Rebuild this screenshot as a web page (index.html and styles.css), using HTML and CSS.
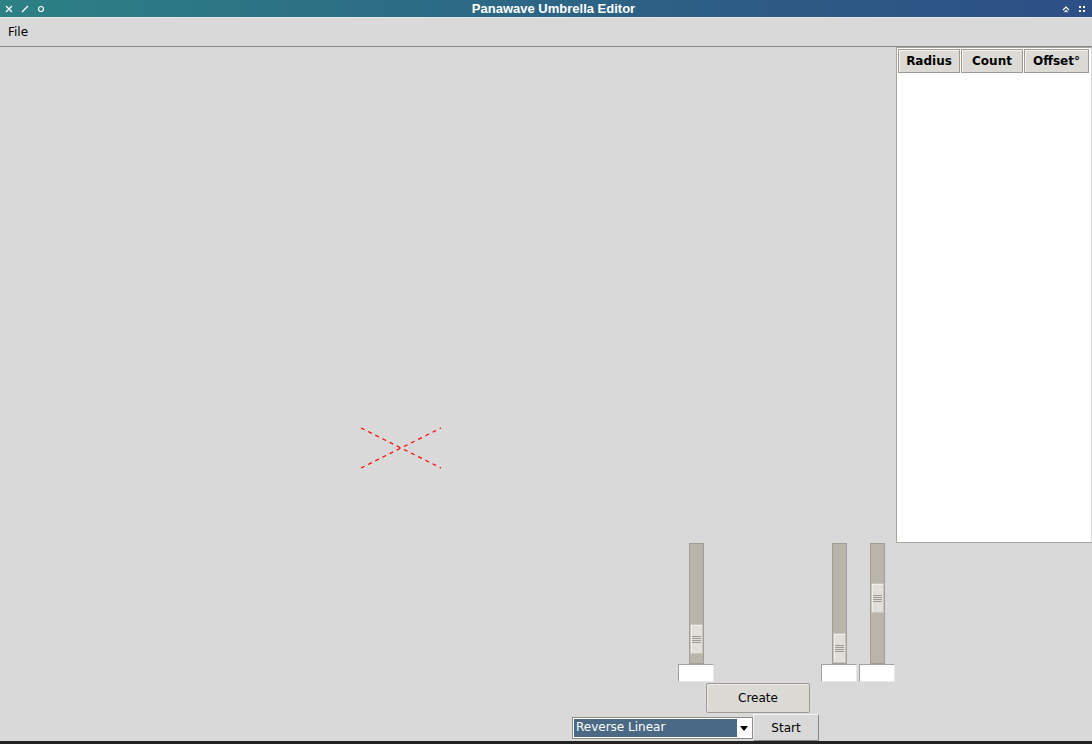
FILE: index.html
```html
<!DOCTYPE html>
<html>
<head>
<meta charset="utf-8">
<link rel="stylesheet" href="styles.css">
</head>
<body>
<div class="window">
  <div class="titlebar">
    <div class="tb-left">
      <svg width="8" height="8" viewBox="0 0 8 8"><path d="M1 1L7 7M7 1L1 7" stroke="#fff" stroke-width="1.2"/></svg>
      <svg width="8" height="8" viewBox="0 0 8 8"><path d="M1 7L7 1" stroke="#fff" stroke-width="1.2"/></svg>
      <svg width="8" height="8" viewBox="0 0 8 8"><circle cx="4" cy="4" r="2.5" fill="none" stroke="#fff" stroke-width="1.2"/></svg>
    </div>
    <div class="tb-title">Panawave Umbrella Editor</div>
    <div class="tb-right">
      <svg width="8" height="8" viewBox="0 0 8 8"><path d="M1 5L4 2L7 5M2.5 7L4 5.5L5.5 7" stroke="#fff" stroke-width="1.1" fill="none"/></svg>
      <svg width="8" height="8" viewBox="0 0 8 8"><rect x="1" y="1" width="2" height="2" fill="#fff"/><rect x="5" y="1" width="2" height="2" fill="#fff"/><rect x="1" y="5" width="2" height="2" fill="#fff"/><rect x="5" y="5" width="2" height="2" fill="#fff"/></svg>
    </div>
  </div>
  <div class="menubar"><span class="menu-item">File</span></div>
  <div class="main">
    <div class="left">
      <div class="canvas">
        <svg class="cross" width="82" height="42" viewBox="0 0 82 42">
          <path d="M1 1L81 41M1 41L81 1" stroke="#ff0000" stroke-width="1.2" stroke-dasharray="4 4" fill="none"/>
        </svg>
      </div>
      <div class="controls">
        <div class="slider-row">
          <div class="sgroup g1">
            <div class="trough"><div class="thumb" style="margin-top:80px"><i></i><i></i><i></i><i></i></div></div>
            <div class="entry"></div>
          </div>
          <div class="sgroup g2">
            <div class="trough"><div class="thumb" style="margin-top:89px"><i></i><i></i><i></i><i></i></div></div>
            <div class="entry"></div>
          </div>
          <div class="sgroup g3">
            <div class="trough"><div class="thumb" style="margin-top:39px"><i></i><i></i><i></i><i></i></div></div>
            <div class="entry"></div>
          </div>
        </div>
        <div class="create-row"><div class="btn create">Create</div></div>
        <div class="start-row">
          <div class="combo"><span class="combo-text">Reverse Linear</span><span class="combo-arrow"><svg width="8" height="5" viewBox="0 0 8 5"><path d="M0 0H8L4 5Z" fill="#000"/></svg></span></div>
          <div class="btn start">Start</div>
        </div>
      </div>
    </div>
    <div class="right">
      <div class="table">
        <div class="thead">
          <div class="th c1">Radius</div>
          <div class="th c2">Count</div>
          <div class="th c3">Offset°</div>
        </div>
      </div>
    </div>
  </div>
  <div class="bottombar"></div>
</div>
</body>
</html>
```
FILE: styles.css
```css
* { box-sizing: border-box; }
html, body { margin: 0; padding: 0; }
body { width: 1092px; height: 744px; overflow: hidden; background: #d9d9d9; font-family: "DejaVu Sans", sans-serif; }
.window { display: flex; flex-direction: column; height: 744px; }
.titlebar {
  height: 18px; flex: none; display: flex; align-items: center;
  background: linear-gradient(to right, #2c8185, #2d5b85 70%, #2d4f86);
  border-bottom: 1px solid #e6e6e6;
}
.tb-left { display: flex; gap: 8px; padding-left: 5px; align-items: center; height: 17px; }
.tb-title { flex: 1; text-align: center; color: #fff; font-family: "Liberation Sans", Arial, sans-serif; font-weight: bold; font-size: 13px; line-height: 17px; }
.tb-right { display: flex; gap: 8px; padding-right: 6px; align-items: center; height: 17px; }
.menubar { height: 29px; flex: none; border-bottom: 1px solid #8a8a8a; display: flex; align-items: center; background: #d9d9d9; padding-bottom: 0; }
.menu-item { font-size: 12px; color: #000; padding-left: 8px; }
.main { flex: 1; display: flex; }
.left { width: 896px; display: flex; flex-direction: column; }
.canvas { height: 496px; position: relative; }
.cross { position: absolute; left: 360px; top: 380px; }
.controls { flex: 1; display: flex; flex-direction: column; }
.slider-row { display: flex; padding-left: 678px; height: 140px; }
.sgroup { width: 36px; display: flex; flex-direction: column; align-items: center; }
.g2 { margin-left: 107px; }
.g3 { margin-left: 2px; }
.trough { width: 15px; height: 121px; background: #bab5ab; border: 1px solid #a29e96; }
.thumb { width: 13px; height: 30px; background: #e1dfda; border: 1px solid #c8c5be; box-shadow: inset 1px 1px 0 #f0efec; display: flex; flex-direction: column; justify-content: center; align-items: center; gap: 1px; }
.thumb i { display: block; width: 9px; height: 1px; background: #9e9a92; }
.entry { width: 36px; height: 18px; background: #fff; border-top: 1px solid #a0a0a0; border-left: 1px solid #a0a0a0; border-right: 1px solid #e8e8e8; border-bottom: 1px solid #e8e8e8; }
.create-row { padding-left: 706px; height: 31px; }
.btn { font-size: 12px; color: #000; display: flex; align-items: center; justify-content: center; background: #dcdad5; }
.create { width: 104px; height: 30px; border: 1px solid #9d9a94; border-radius: 2px; box-shadow: inset 1px 1px 0 #ecebe8; }
.start-row { display: flex; align-items: flex-start; padding-left: 572px; }
.combo { margin-top: 3px; width: 181px; height: 22px; border: 1px solid #8e8c86; background: #fff; display: flex; padding: 1px; }
.combo-text { flex: 1; background: #4a6984; color: #fff; font-size: 12px; line-height: 16px; padding-left: 2px; padding-bottom: 2px; }
.combo-arrow { width: 14px; display: flex; align-items: center; justify-content: center; background: #fff; }
.start { width: 66px; height: 27px; border: 1px solid #9d9a94; border-top-color: #f2f2f2; border-left-color: #f2f2f2; border-right-color: #8a8884; border-bottom-color: #8a8884; background: #d9d9d9; }
.right { flex: 1; }
.table { height: 496px; background: #fff; border: 1px solid #a9a59c; border-right-color: #d9d9d9; padding: 1px; }
.thead { display: flex; gap: 1px; }
.th { height: 24px; background: #dcdad5; border: 1px solid #9d9a94; box-shadow: inset 1px 1px 0 #f4f3f0; font-weight: bold; font-size: 12px; display: flex; align-items: center; justify-content: center; color: #000; }
.c1 { width: 62px; }
.c2 { width: 62px; }
.c3 { width: 65px; }
.bottombar { height: 3px; background: #222; flex: none; }
```
